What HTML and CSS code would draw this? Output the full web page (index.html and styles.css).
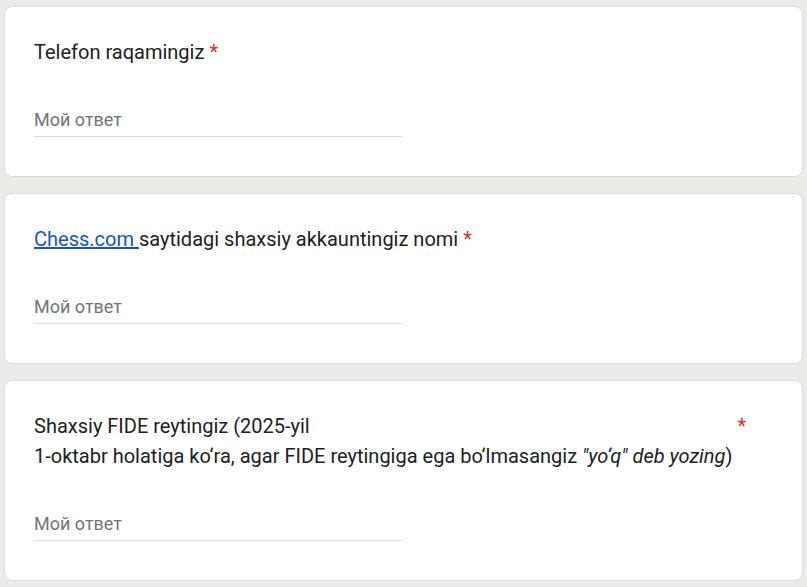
FILE: index.html
```html
<!DOCTYPE html>
<html lang="uz">
<head>
<meta charset="utf-8">
<title>Form</title>
<link rel="stylesheet" href="styles.css">
</head>
<body>
<div class="form">
  <div class="card">
    <div class="question">
      <div class="title">Telefon raqamingiz</div>
      <span class="req">*</span>
    </div>
    <div class="input"><span class="placeholder">Мой ответ</span></div>
  </div>
  <div class="card">
    <div class="question">
      <div class="title"><a class="link" href="#">Chess.com </a>saytidagi shaxsiy akkauntingiz nomi</div>
      <span class="req">*</span>
    </div>
    <div class="input"><span class="placeholder">Мой ответ</span></div>
  </div>
  <div class="card">
    <div class="question">
      <div class="title">Shaxsiy FIDE reytingiz (2025-yil<br>1-oktabr holatiga ko‘ra, agar FIDE reytingiga ega bo‘lmasangiz <i>"yo‘q" deb yozing</i>)</div>
      <span class="req">*</span>
    </div>
    <div class="input"><span class="placeholder">Мой ответ</span></div>
  </div>
</div>
</body>
</html>
```
FILE: styles.css
```css
html, body {
  margin: 0;
  padding: 0;
  background: #edebe8;
}
body {
  font-family: Roboto, "Liberation Sans", Arial, sans-serif;
  color: #202124;
}
.form {
  display: flex;
  flex-direction: column;
  gap: 16px;
  padding: 6px 4px;
}
.card {
  background: #fff;
  border: 1px solid #dadce0;
  border-radius: 8px;
  padding: 30px 29px 39px;
}
.question {
  display: flex;
  align-items: flex-start;
  font-size: 20px;
  line-height: 30px;
}
.title {
  white-space: nowrap;
}
.link {
  color: #1155cc;
  text-decoration: underline;
}
.req {
  color: #d93025;
  margin-left: 5px;
}
.input {
  margin-top: 34px;
  width: 369px;
  height: 33px;
  padding-top: 2px;
  border-bottom: 1px solid #dadce0;
  display: flex;
  align-items: center;
}
.placeholder {
  font-size: 18px;
  color: #70757a;
}
```
